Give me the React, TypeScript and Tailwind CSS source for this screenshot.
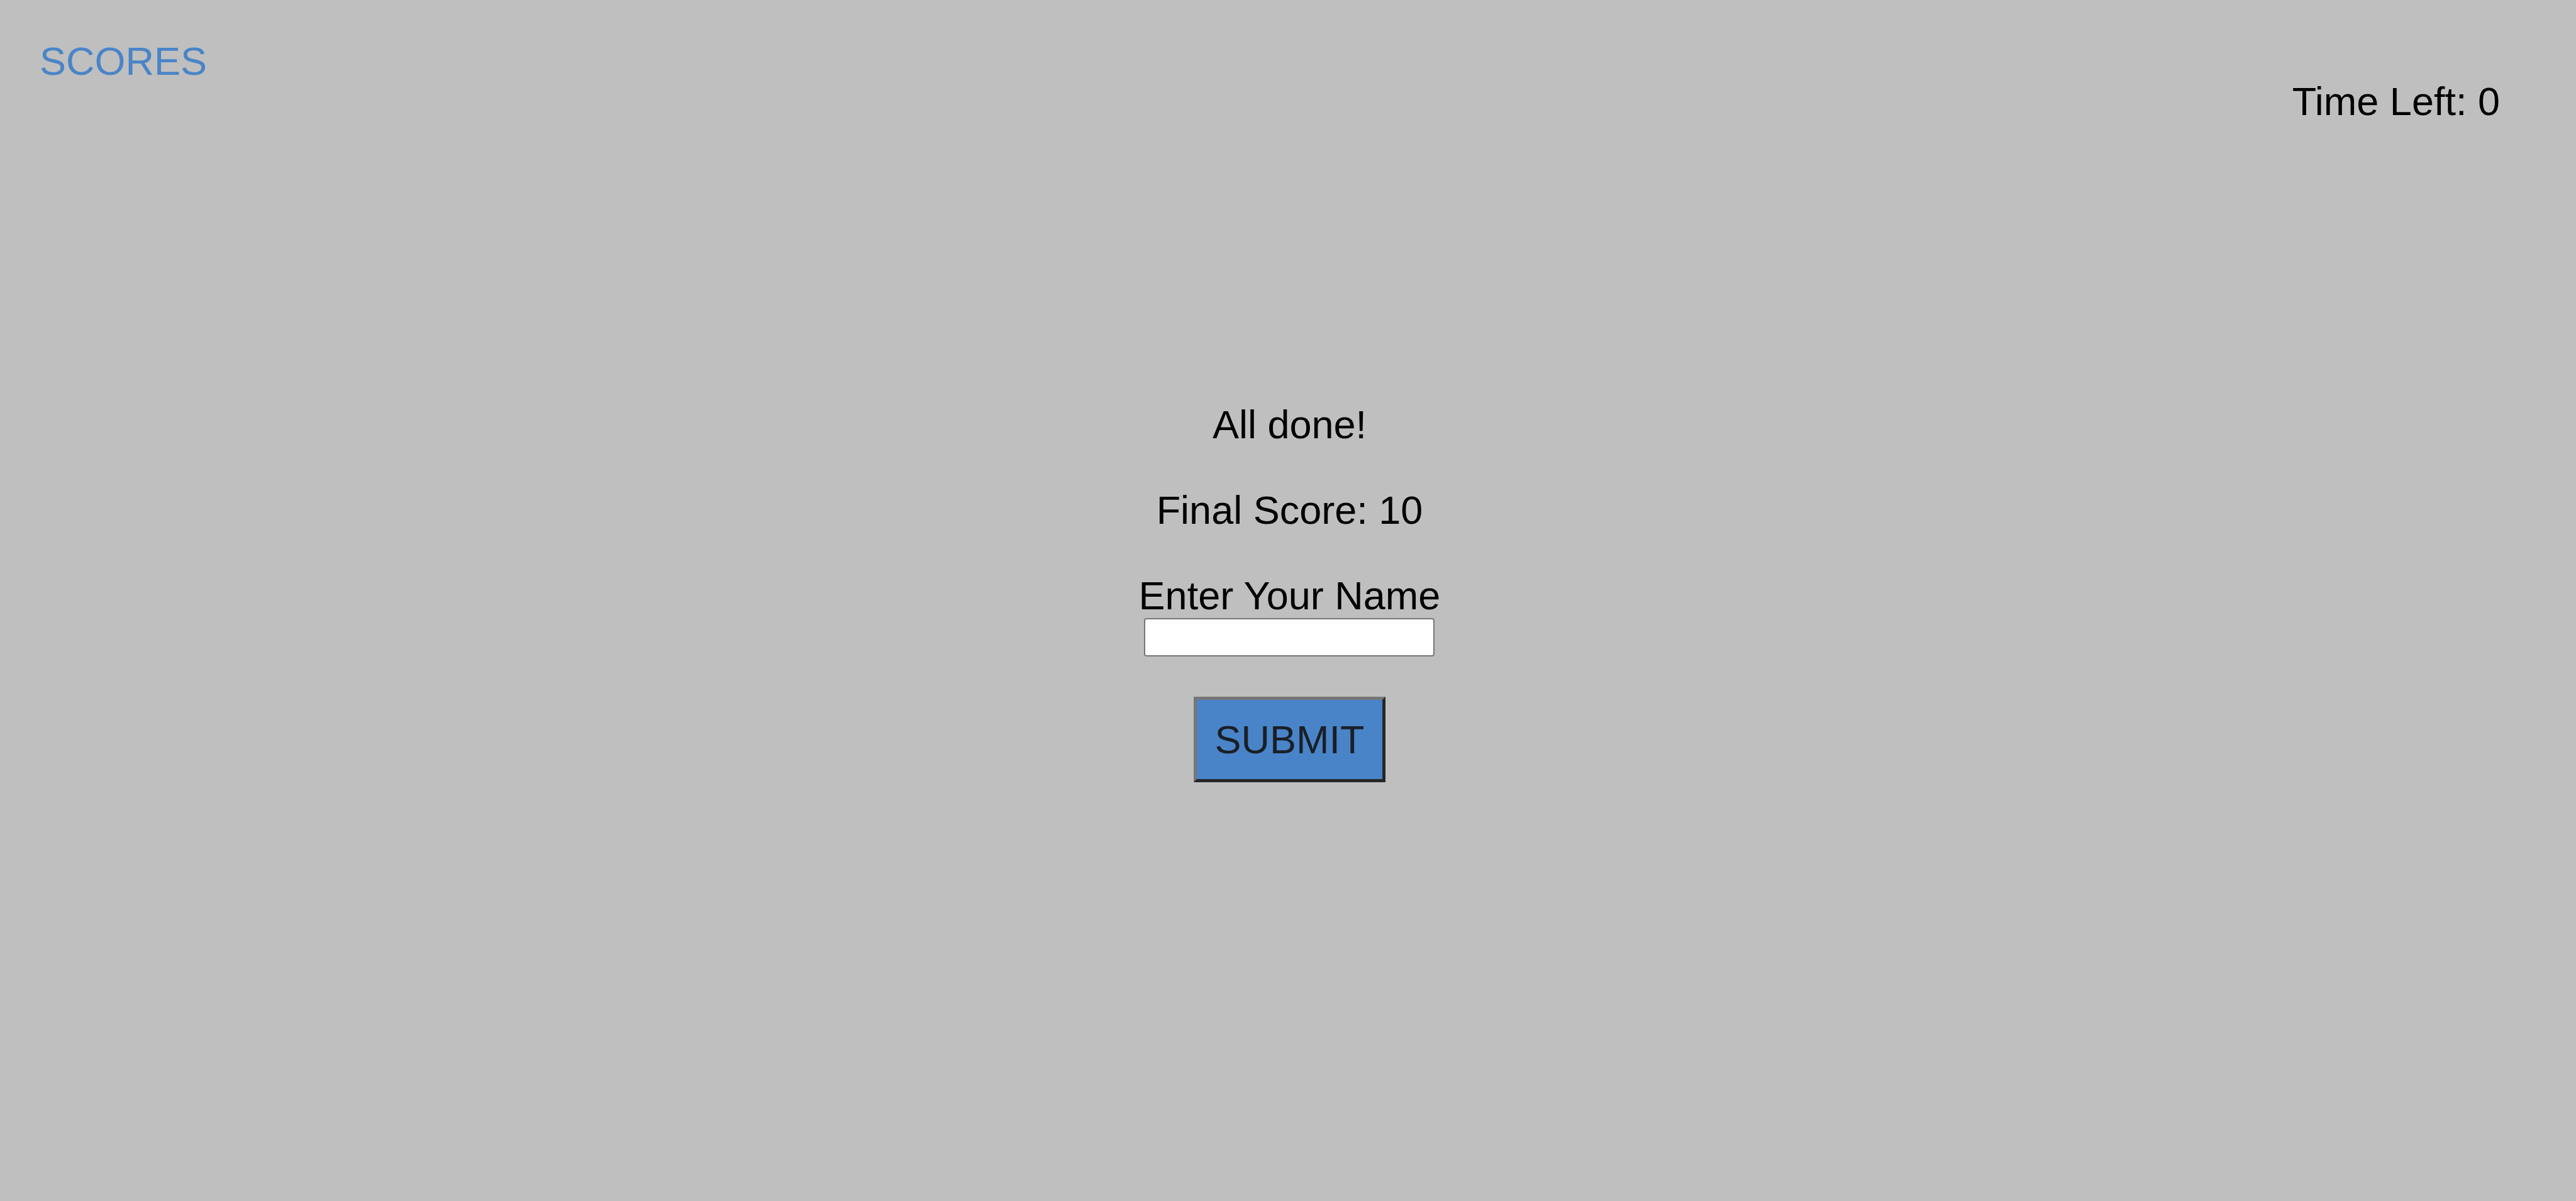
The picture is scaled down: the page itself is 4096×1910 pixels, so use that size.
export default function App() {
  return (
    <div className="flex min-h-screen flex-col bg-[#bfbfbf] font-['Liberation_Sans',Arial,sans-serif] text-[63px] leading-[72px] text-black">
      <header className="flex items-start justify-between px-[63px] pt-[61px]">
        <a href="#scores" className="text-[#4a84c8]">SCORES</a>
        <p className="mt-16 mr-[58px]">Time Left: 0</p>
      </header>
      <main className="mt-[442px] flex flex-col items-center pl-[5px]">
        <h1>All done!</h1>
        <p className="mt-16">Final Score: 10</p>
        <form className="mt-16 flex flex-col items-center" onSubmit={(e) => e.preventDefault()}>
          <label htmlFor="player-name">Enter Your Name</label>
          <input id="player-name" type="text" className="h-[61px] w-[462px] rounded-[4px] border-2 border-[#767676] bg-white px-2 text-[40px]" />
          <button type="submit" className="mt-16 border-5 border-t-[#767676] border-r-[#262626] border-b-[#262626] border-l-[#767676] bg-[#4a84c8] px-7 py-[27px] text-[#1a1f26]">SUBMIT</button>
        </form>
      </main>
    </div>
  );
}
